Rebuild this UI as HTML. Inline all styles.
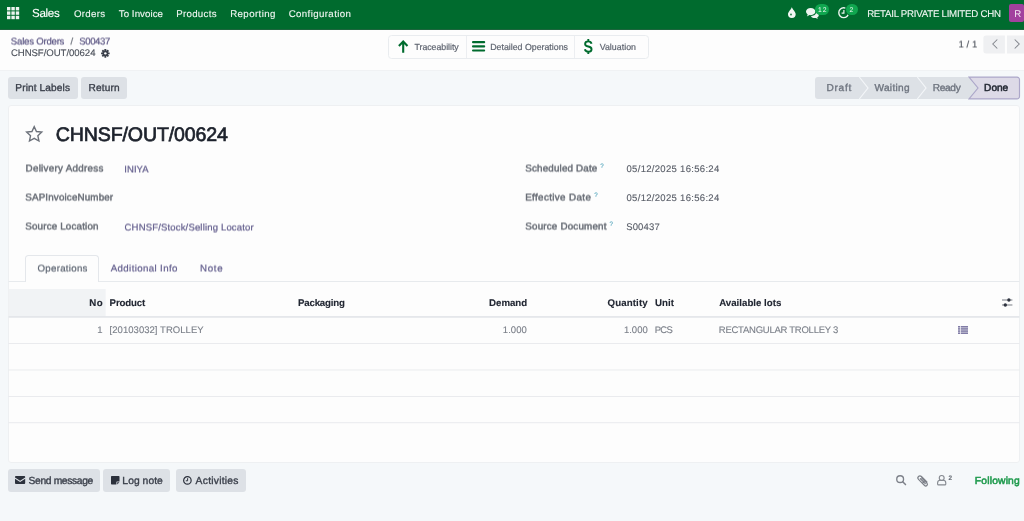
<!DOCTYPE html>
<html lang="en">
<head>
<meta charset="utf-8">
<title>CHNSF/OUT/00624 - Sales</title>
<style>
html,body{margin:0;padding:0;width:1024px;height:521px;overflow:hidden}
body{width:1024px;height:521px;overflow:hidden;position:relative;background:#f5f8fa;font-family:"Liberation Sans",sans-serif}
.t{position:absolute;white-space:nowrap;line-height:1;text-rendering:geometricPrecision;margin:0;font-weight:400;font-family:"Liberation Sans",sans-serif}
.a{position:absolute;box-sizing:border-box}
svg{position:absolute;overflow:visible}
#app{position:absolute;left:0;top:0;width:1024px;height:521px;overflow:hidden;will-change:transform}
.half{position:absolute;left:0;top:0;width:1024px;height:521px;overflow:hidden;will-change:transform;transform:translateY(-.5px) rotate(.0001deg);transform-origin:0 0}
nav.top{left:0;top:0;width:1024px;height:29px;background:#006b2e}
.navedge{left:0;top:29px;width:1024px;height:1px;background:#1c653d}
.badge{background:#10a64f;border-radius:6px;height:11.4px;top:3.8px}
.avatar{left:1009.2px;top:4.4px;width:14.8px;height:17.9px;background:#a2419e;border-radius:2px}
header.cp{left:0;top:30px;width:1024px;height:40px;background:#fdfdfd;border-bottom:1px solid #f0f2f4;height:41px}
.btnbox{left:388px;top:35px;width:260.5px;height:23.5px;border:1px solid #e9ecef;border-radius:3.5px;background:#fdfdfd}
.vsep{top:36px;width:1px;height:21.5px;background:#eceef1}
.btn{background:#dde1e6;border-radius:3px}
.sheet{left:8px;top:105px;width:1012px;height:358px;background:#fdfdfd;border:1px solid #eef0f2;border-radius:3px}
.tab{left:25.2px;top:255px;width:74px;height:27px;background:#fdfdfd;border:1px solid #e4e7eb;border-bottom:0;border-radius:3.5px 3.5px 0 0}
</style>
</head>
<body>
<div id="app">
<!-- ===== top navigation ===== -->
<nav class="a top"></nav>
<div class="a navedge"></div>
<svg style="left:6.8px;top:6.8px" width="12.2" height="12.2" viewBox="0 0 12.2 12.2"><g fill="#fff" opacity=".93"><rect x="0" y="0" width="3.4" height="3.4"/><rect x="4.4" y="0" width="3.4" height="3.4"/><rect x="8.8" y="0" width="3.4" height="3.4"/><rect x="0" y="4.4" width="3.4" height="3.4"/><rect x="4.4" y="4.4" width="3.4" height="3.4"/><rect x="8.8" y="4.4" width="3.4" height="3.4"/><rect x="0" y="8.8" width="3.4" height="3.4"/><rect x="4.4" y="8.8" width="3.4" height="3.4"/><rect x="8.8" y="8.8" width="3.4" height="3.4"/></g></svg>
<span class="t" style="left:31.99px;top:8.00px;font-size:11.6px;letter-spacing:-0.302px;color:#ffffff;-webkit-text-stroke:.12px;">Sales</span>
<span class="t" style="left:74.00px;top:10.00px;font-size:9.7px;letter-spacing:0.284px;color:rgba(255,255,255,.92);-webkit-text-stroke:.12px;">Orders</span><span class="t" style="left:118.75px;top:10.00px;font-size:9.7px;letter-spacing:0.067px;color:rgba(255,255,255,.92);-webkit-text-stroke:.12px;">To Invoice</span><span class="t" style="left:176.21px;top:10.00px;font-size:9.7px;letter-spacing:0.297px;color:rgba(255,255,255,.92);-webkit-text-stroke:.12px;">Products</span><span class="t" style="left:230.20px;top:10.00px;font-size:9.7px;letter-spacing:0.398px;color:rgba(255,255,255,.92);-webkit-text-stroke:.12px;">Reporting</span><span class="t" style="left:288.70px;top:10.00px;font-size:9.7px;letter-spacing:0.383px;color:rgba(255,255,255,.92);-webkit-text-stroke:.12px;">Configuration</span>
<!-- droplet -->
<svg style="left:787.6px;top:7px" width="7.7" height="11" viewBox="0 0 7.7 11"><path fill="#fff" fill-opacity=".95" d="M3.85 0 C4.4 2.6 7.7 4.6 7.7 7.3 A3.85 3.7 0 0 1 0 7.3 C0 4.6 3.3 2.6 3.85 0 Z"/><circle cx="3" cy="7.6" r="1" fill="#006b2e" fill-opacity=".8"/></svg>
<!-- comments -->
<svg style="left:806px;top:7.9px" width="12.8" height="10.8" viewBox="0 0 12.8 10.8"><g fill="#fff" fill-opacity=".93"><path d="M4.7 0 C7.3 0 9.4 1.6 9.4 3.6 C9.4 5.6 7.3 7.2 4.7 7.2 C4.3 7.2 3.9 7.16 3.5 7.1 C2.8 7.8 1.8 8.3 0.7 8.4 C1.2 7.8 1.6 7.2 1.7 6.4 C0.65 5.75 0 4.75 0 3.6 C0 1.6 2.1 0 4.7 0 Z"/><path d="M10.3 4.1 C11.8 4.6 12.8 5.7 12.8 6.9 C12.8 7.9 12.2 8.8 11.2 9.4 C11.3 10 11.6 10.4 12.1 10.8 C11.2 10.75 10.4 10.4 9.8 9.9 C9.4 10 9 10.05 8.6 10.05 C7.2 10.05 5.9 9.5 5.1 8.7 C5.2 8.5 5.3 8.2 5.4 8 C8.2 7.9 10.4 6 10.4 3.8 Z"/></g></svg>
<div class="a badge" style="left:815px;width:14.1px"></div>
<span class="t" style="left:818.01px;top:8.00px;font-size:6.8px;letter-spacing:1.034px;color:rgba(255,255,255,.95);">12</span>
<!-- activity clock -->
<svg style="left:838px;top:7.2px" width="11.4" height="11.4" viewBox="0 0 11.4 11.4"><circle cx="5.7" cy="5.7" r="4.9" fill="none" stroke="#fff" stroke-opacity=".93" stroke-width="1.4"/><path d="M5.9 2.9 V6.2 H3.6" fill="none" stroke="#fff" stroke-opacity=".93" stroke-width="1.2"/></svg>
<div class="a" style="left:844.6px;top:2.9px;width:14.2px;height:13.2px;border-radius:7px;background:#006b2e"></div>
<div class="a badge" style="left:845.6px;width:12.3px"></div>
<span class="t" style="left:849.45px;top:8.00px;font-size:6.8px;color:rgba(255,255,255,.95);">2</span>
<span class="t" style="left:867.14px;top:10.00px;font-size:9.7px;letter-spacing:-0.254px;color:rgba(255,255,255,.92);-webkit-text-stroke:.12px;">RETAIL PRIVATE LIMITED CHN</span>
<div class="a avatar"></div>
<span class="t" style="left:1014.33px;top:10.00px;font-size:9.7px;color:rgba(255,255,255,.88);">R</span>

<!-- ===== control panel ===== -->
<header class="a cp"></header>
<div class="half"><span class="t" style="left:10.85px;top:38.00px;font-size:9.6px;letter-spacing:-0.221px;color:#5a5482;-webkit-text-stroke:.2px;">Sales Orders</span><span class="t" style="left:70.45px;top:38.00px;font-size:9.6px;color:#6b7079;-webkit-text-stroke:.2px;">/</span><span class="t" style="left:79.26px;top:38.00px;font-size:9.6px;letter-spacing:-0.413px;color:#5a5482;-webkit-text-stroke:.2px;">S00437</span><span class="t" style="left:958.41px;top:41.00px;font-size:9.6px;letter-spacing:0.050px;color:#4b505a;-webkit-text-stroke:.12px;">1 / 1</span></div>
<span class="t" style="left:10.90px;top:49.00px;font-size:9.6px;letter-spacing:-0.052px;color:#4a4f59;-webkit-text-stroke:.12px;">CHNSF/OUT/00624</span>
<!-- gear -->
<svg style="left:100.9px;top:48.5px" width="8.7" height="8.7" viewBox="-4.5 -4.5 9 9"><g fill="#3b404b"><circle r="3.05"/><rect x="-1" y="-4.45" width="2" height="8.9" rx=".35"/><rect x="-1" y="-4.45" width="2" height="8.9" rx=".35" transform="rotate(45)"/><rect x="-1" y="-4.45" width="2" height="8.9" rx=".35" transform="rotate(90)"/><rect x="-1" y="-4.45" width="2" height="8.9" rx=".35" transform="rotate(135)"/></g><circle r="1.25" fill="#fdfdfd"/></svg>
<div class="a btnbox"></div>
<div class="a vsep" style="left:465.5px"></div>
<div class="a vsep" style="left:574px"></div>
<!-- arrow up -->
<svg style="left:397.9px;top:40.1px" width="10.4" height="12.8" viewBox="0 0 10.4 12.8"><path d="M5.2 1.6 V12.8 M0.9 5.9 L5.2 1.6 L9.5 5.9" fill="none" stroke="#006b2e" stroke-width="2.1" stroke-linejoin="miter"/></svg>
<span class="t" style="left:414.50px;top:43.00px;font-size:8.8px;letter-spacing:-0.039px;color:#5f6570;-webkit-text-stroke:.2px;">Traceability</span>
<!-- bars -->
<svg style="left:472.1px;top:41.3px" width="13.2" height="10.6" viewBox="0 0 13.2 10.6"><g fill="#006b2e"><rect x="0" y="0" width="13.2" height="2.2" rx="1"/><rect x="0" y="4.2" width="13.2" height="2.2" rx="1"/><rect x="0" y="8.4" width="13.2" height="2.2" rx="1"/></g></svg>
<span class="t" style="left:490.20px;top:43.00px;font-size:8.8px;color:#5f6570;-webkit-text-stroke:.2px;">Detailed Operations</span>
<svg style="left:583.6px;top:39.1px" width="8.6" height="15" viewBox="0 0 8.6 15"><path d="M4.3 0 V2.4 M4.3 12.6 V15 M7.55 4.7 C7.2 3.2 6 2.35 4.3 2.35 C2.4 2.35 1.1 3.4 1.1 4.9 C1.1 6.4 2.3 7 4.3 7.45 C6.3 7.9 7.55 8.6 7.55 10.15 C7.55 11.7 6.2 12.7 4.3 12.7 C2.5 12.7 1.25 11.9 0.9 10.3" fill="none" stroke="#006b2e" stroke-width="1.9"/></svg>
<span class="t" style="left:599.68px;top:43.00px;font-size:8.8px;letter-spacing:0.035px;color:#5f6570;-webkit-text-stroke:.2px;">Valuation</span>
<svg style="left:0;top:0" width="1024" height="521" viewBox="0 0 1024 521"><path d="M986 35.5 H1004.9 V53.4 H986 A2.6 2.6 0 0 1 983.4 50.8 V38.1 A2.6 2.6 0 0 1 986 35.5 Z M1007 35.5 H1024 V53.4 H1007 Z" fill="#eff0f2"/></svg>
<svg style="left:991.5px;top:39px" width="6" height="10" viewBox="0 0 6 10"><path d="M5.3 0.5 L0.8 5 L5.3 9.5" fill="none" stroke="#84878e" stroke-width="1.05"/></svg>
<svg style="left:1014.3px;top:39px" width="6" height="10" viewBox="0 0 6 10"><path d="M0.7 0.5 L5.2 5 L0.7 9.5" fill="none" stroke="#84878e" stroke-width="1.05"/></svg>

<!-- ===== status bar ===== -->
<section>
<div class="a btn" style="left:8px;top:77px;width:69.6px;height:22px"></div>
<span class="t" style="left:15.37px;top:84.00px;font-size:10.1px;letter-spacing:0.116px;color:#3a3f4a;-webkit-text-stroke:.35px;">Print Labels</span>
<div class="a btn" style="left:81px;top:77px;width:46.4px;height:22px"></div>
<span class="t" style="left:88.41px;top:84.00px;font-size:10.1px;letter-spacing:0.205px;color:#3a3f4a;-webkit-text-stroke:.35px;">Return</span>
<svg style="left:815px;top:77px" width="205" height="22" viewBox="815 77 205 22">
<path d="M818 77 H982 V99 H818 A3 3 0 0 1 815 96 V80 A3 3 0 0 1 818 77 Z" fill="#dde1e6"/>
<path d="M859.3 77 L868 88 L859.3 99" fill="none" stroke="#f4f6f9" stroke-width="1.2"/>
<path d="M917.3 77 L926 88 L917.3 99" fill="none" stroke="#f4f6f9" stroke-width="1.2"/>
<path d="M969 77.1 H1017 A2.5 2.5 0 0 1 1019.5 79.6 V96.4 A2.5 2.5 0 0 1 1017 98.9 H969 L978 88 Z" fill="#dddae7" stroke="#aca7c9" stroke-width="1.15"/>
</svg>
<span class="t" style="left:826.50px;top:84.00px;font-size:10.1px;letter-spacing:0.733px;color:#6e747f;-webkit-text-stroke:.35px;">Draft</span><span class="t" style="left:874.46px;top:84.00px;font-size:10.1px;letter-spacing:0.308px;color:#6e747f;-webkit-text-stroke:.35px;">Waiting</span><span class="t" style="left:932.72px;top:84.00px;font-size:10.1px;letter-spacing:-0.288px;color:#6e747f;-webkit-text-stroke:.35px;">Ready</span><span class="t" style="left:984.10px;top:84.00px;font-size:10.1px;letter-spacing:-0.008px;color:#262b36;-webkit-text-stroke:.55px;">Done</span>
</section>

<!-- ===== form sheet ===== -->
<main>
<div class="a sheet"></div>
<!-- star -->
<svg style="left:25.2px;top:124.9px" width="18.4" height="17.6" viewBox="0 0 18.4 17.6"><path d="M9.2 1.6 L11.45 6.5 L16.8 7.1 L12.85 10.75 L13.95 16 L9.2 13.35 L4.45 16 L5.55 10.75 L1.6 7.1 L6.95 6.5 Z" fill="none" stroke="#6c717a" stroke-width="1.35" stroke-linejoin="miter"/></svg>
<h1 class="t" style="left:55.75px;top:126.00px;font-size:19.6px;letter-spacing:-0.149px;color:#1d222c;-webkit-text-stroke:.7px;">CHNSF/OUT/00624</h1>
<div class="half"><label class="t" style="left:25.56px;top:165.00px;font-size:9.8px;letter-spacing:0.284px;color:#666b74;-webkit-text-stroke:.45px;">Delivery Address</label><span class="t" style="left:124.34px;top:166.00px;font-size:9.5px;letter-spacing:0.052px;color:#5f5a8a;-webkit-text-stroke:.2px;">INIYA</span><label class="t" style="left:25.30px;top:194.00px;font-size:9.8px;letter-spacing:0.156px;color:#666b74;-webkit-text-stroke:.45px;">SAPInvoiceNumber</label><label class="t" style="left:25.30px;top:223.00px;font-size:9.8px;letter-spacing:0.168px;color:#666b74;-webkit-text-stroke:.45px;">Source Location</label><span class="t" style="left:124.59px;top:224.00px;font-size:9.5px;letter-spacing:0.172px;color:#5f5a8a;-webkit-text-stroke:.2px;">CHNSF/Stock/Selling Locator</span><label class="t" style="left:525.33px;top:165.00px;font-size:9.8px;letter-spacing:0.167px;color:#666b74;-webkit-text-stroke:.45px;">Scheduled Date</label><label class="t" style="left:525.21px;top:194.00px;font-size:9.8px;letter-spacing:0.372px;color:#666b74;-webkit-text-stroke:.45px;">Effective Date</label><label class="t" style="left:525.33px;top:223.00px;font-size:9.8px;letter-spacing:0.189px;color:#666b74;-webkit-text-stroke:.45px;">Source Document</label></div>
<sup class="t" style="left:600.18px;top:164.00px;font-size:6.3px;color:#6fb3c6;-webkit-text-stroke:.2px;">?</sup><span class="t" style="left:626.54px;top:165.00px;font-size:9.5px;letter-spacing:0.306px;color:#585d67;-webkit-text-stroke:.12px;">05/12/2025 16:56:24</span>
<sup class="t" style="left:594.18px;top:193.00px;font-size:6.3px;color:#6fb3c6;-webkit-text-stroke:.2px;">?</sup><span class="t" style="left:626.54px;top:194.00px;font-size:9.5px;letter-spacing:0.306px;color:#585d67;-webkit-text-stroke:.12px;">05/12/2025 16:56:24</span>
<sup class="t" style="left:609.43px;top:222.00px;font-size:6.3px;color:#6fb3c6;-webkit-text-stroke:.2px;">?</sup><span class="t" style="left:626.15px;top:223.00px;font-size:9.5px;letter-spacing:0.160px;color:#585d67;-webkit-text-stroke:.12px;">S00437</span>
<svg style="left:0;top:0" width="1024" height="521" viewBox="0 0 1024 521"><rect x="8.6" y="281" width="1010.8" height=".8" fill="#e2e5e9"/></svg>
<div class="a tab"></div>
<div class="half"><span class="t" style="left:37.53px;top:265.00px;font-size:9.7px;letter-spacing:0.280px;color:#5b6370;-webkit-text-stroke:.2px;">Operations</span><span class="t" style="left:110.78px;top:265.00px;font-size:9.7px;letter-spacing:0.372px;color:#5f5a8a;-webkit-text-stroke:.2px;">Additional Info</span><span class="t" style="left:200.12px;top:265.00px;font-size:9.7px;letter-spacing:0.647px;color:#5f5a8a;-webkit-text-stroke:.2px;">Note</span></div>
<svg style="left:0;top:0" width="1024" height="521" viewBox="0 0 1024 521"><rect x="8.6" y="289" width="97.1" height="27.3" fill="#f1f3f5"/></svg>
<span class="t" style="left:89.32px;top:299.00px;font-size:9.7px;font-weight:700;letter-spacing:0.364px;color:#222733;-webkit-text-stroke:.12px;">No</span><span class="t" style="left:109.59px;top:299.00px;font-size:9.7px;font-weight:700;letter-spacing:-0.146px;color:#222733;-webkit-text-stroke:.12px;">Product</span><span class="t" style="left:298.03px;top:299.00px;font-size:9.7px;font-weight:700;letter-spacing:-0.203px;color:#222733;-webkit-text-stroke:.12px;">Packaging</span><span class="t" style="left:489.02px;top:299.00px;font-size:9.7px;font-weight:700;letter-spacing:-0.011px;color:#222733;-webkit-text-stroke:.12px;">Demand</span><span class="t" style="left:607.61px;top:299.00px;font-size:9.7px;font-weight:700;letter-spacing:0.101px;color:#222733;-webkit-text-stroke:.12px;">Quantity</span><span class="t" style="left:655.04px;top:299.00px;font-size:9.7px;font-weight:700;letter-spacing:0.033px;color:#222733;-webkit-text-stroke:.12px;">Unit</span><span class="t" style="left:719.19px;top:299.00px;font-size:9.7px;font-weight:700;letter-spacing:0.004px;color:#222733;-webkit-text-stroke:.12px;">Available lots</span>
<!-- sliders -->
<svg style="left:1001.6px;top:298px" width="10.4" height="9" viewBox="0 0 10.4 9"><g stroke="#4a4f5a" stroke-width="1" fill="#2f3440"><path d="M0 2 H10.4 M0 7 H10.4" fill="none" stroke-opacity=".75"/><circle cx="6.9" cy="2" r="1.7" stroke="none"/><circle cx="3.3" cy="7" r="1.7" stroke="none"/></g></svg>
<svg style="left:0;top:0" width="1024" height="521" viewBox="0 0 1024 521"><rect x="8.6" y="316.2" width="1010.8" height="1.45" fill="#dfe2e7"/><g fill="#e3e5e9"><rect x="8.6" y="343.2" width="1010.8" height=".75"/><rect x="8.6" y="369.6" width="1010.8" height=".75"/><rect x="8.6" y="396" width="1010.8" height=".75"/><rect x="8.6" y="422.4" width="1010.8" height=".75"/></g></svg>
<span class="t" style="left:97.23px;top:326.00px;font-size:9.5px;color:#7a7f88;-webkit-text-stroke:.12px;">1</span><span class="t" style="left:109.59px;top:326.00px;font-size:9.5px;letter-spacing:0.043px;color:#7a7f88;-webkit-text-stroke:.12px;">[20103032] TROLLEY</span><span class="t" style="left:502.78px;top:326.00px;font-size:9.5px;letter-spacing:0.090px;color:#7a7f88;-webkit-text-stroke:.12px;">1.000</span><span class="t" style="left:623.98px;top:326.00px;font-size:9.5px;letter-spacing:-0.013px;color:#7a7f88;-webkit-text-stroke:.12px;">1.000</span><span class="t" style="left:654.79px;top:326.00px;font-size:9.5px;letter-spacing:-0.801px;color:#7a7f88;-webkit-text-stroke:.12px;">PCS</span><span class="t" style="left:718.79px;top:326.00px;font-size:9.5px;letter-spacing:-0.251px;color:#7a7f88;-webkit-text-stroke:.12px;">RECTANGULAR TROLLEY 3</span>
<!-- list icon -->
<svg style="left:958.1px;top:326px" width="10" height="8" viewBox="0 0 10 8"><g fill="#817ca6"><rect x="0" y="0" width="2" height="1.6"/><rect x="2.7" y="0" width="7.3" height="1.6"/><rect x="0" y="2.13" width="2" height="1.6"/><rect x="2.7" y="2.13" width="7.3" height="1.6"/><rect x="0" y="4.27" width="2" height="1.6"/><rect x="2.7" y="4.27" width="7.3" height="1.6"/><rect x="0" y="6.4" width="2" height="1.6"/><rect x="2.7" y="6.4" width="7.3" height="1.6"/></g></svg>
</main>

<!-- ===== chatter ===== -->
<footer>
<div class="a btn" style="left:8px;top:469px;width:92px;height:23px"></div>
<svg style="left:15.2px;top:476.4px" width="10.2" height="7.9" viewBox="0 0 10.2 7.9"><path d="M0 0.9 A.9 .9 0 0 1 .9 0 H9.3 A.9 .9 0 0 1 10.2 .9 V1.5 L5.1 4.7 L0 1.5 Z M0 2.8 L5.1 6 L10.2 2.8 V7 A.9 .9 0 0 1 9.3 7.9 H.9 A.9 .9 0 0 1 0 7 Z" fill="#2c313c"/></svg>
<span class="t" style="left:28.52px;top:477.00px;font-size:10.3px;letter-spacing:-0.359px;color:#3a3f4a;-webkit-text-stroke:.35px;">Send message</span>
<div class="a btn" style="left:103.1px;top:469px;width:66.8px;height:23px"></div>
<svg style="left:111px;top:476.3px" width="8.5" height="8.5" viewBox="0 0 8.5 8.5"><path d="M.7 0 H7.8 A.7 .7 0 0 1 8.5 .7 V5.4 H6 A.6 .6 0 0 0 5.4 6 V8.5 H.7 A.7 .7 0 0 1 0 7.8 V.7 A.7 .7 0 0 1 .7 0 Z M6.2 6.2 H8.4 L6.2 8.4 Z" fill="#2c313c"/></svg>
<span class="t" style="left:122.36px;top:477.00px;font-size:10.3px;letter-spacing:0.052px;color:#3a3f4a;-webkit-text-stroke:.35px;">Log note</span>
<div class="a btn" style="left:176.1px;top:469px;width:69.8px;height:23px"></div>
<svg style="left:183.4px;top:476px" width="8.8" height="8.8" viewBox="0 0 8.8 8.8"><circle cx="4.4" cy="4.4" r="3.75" fill="none" stroke="#2c313c" stroke-width="1.2"/><path d="M4.6 2.2 V4.8 H2.8" fill="none" stroke="#2c313c" stroke-width="1"/></svg>
<span class="t" style="left:195.61px;top:477.00px;font-size:10.3px;letter-spacing:0.250px;color:#3a3f4a;-webkit-text-stroke:.35px;">Activities</span>
<!-- search -->
<svg style="left:895.9px;top:474.9px" width="10.2" height="10.2" viewBox="0 0 10.2 10.2"><circle cx="4.15" cy="4.15" r="3.4" fill="none" stroke="#7d8189" stroke-width="1.35"/><path d="M6.7 6.8 L9.5 9.6" stroke="#7d8189" stroke-width="1.5" stroke-linecap="round"/></svg>
<!-- paperclip -->
<svg style="left:916.7px;top:474.8px" width="11" height="11.8" viewBox="0 0 11 11.8"><g fill="none" stroke="#7d8189" stroke-linecap="round"><path d="M9.9 7 L4.4 1.5 A2.05 2.05 0 0 0 1.5 4.4 L7.6 10.5 A1.6 1.6 0 0 0 9.9 8.2 L4.7 3" stroke-width="1.2"/><path d="M8.3 8.6 L3.4 3.7 M7.3 6.2 L5.9 7.6" stroke-width="1.3"/></g></svg>
<!-- user -->
<svg style="left:936.6px;top:474.8px" width="9.4" height="10.5" viewBox="0 0 9.4 10.5"><circle cx="4.7" cy="3" r="2.45" fill="none" stroke="#84888f" stroke-width="1.1"/><path d="M.6 8.9 V7.9 A2.7 2.7 0 0 1 3.3 5.2 H6.1 A2.7 2.7 0 0 1 8.8 7.9 V8.9 A1 1 0 0 1 7.8 9.9 H1.6 A1 1 0 0 1 .6 8.9 Z" fill="none" stroke="#84888f" stroke-width="1.1"/></svg>
<sup class="t" style="left:948.59px;top:476.00px;font-size:6.4px;font-weight:700;color:#6b7079;-webkit-text-stroke:.12px;">2</sup>
<span class="t" style="left:974.87px;top:477.00px;font-size:10.3px;letter-spacing:0.173px;color:#1f9a4d;-webkit-text-stroke:.55px;">Following</span>
</footer>
</div>
</body>
</html>
